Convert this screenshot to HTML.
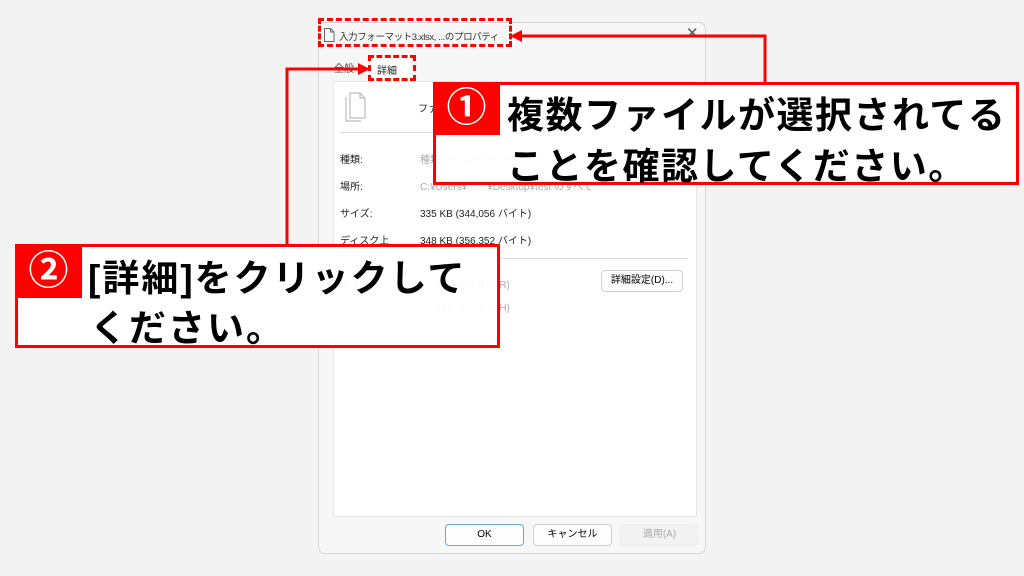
<!DOCTYPE html>
<html><head><meta charset="utf-8"><style>
*{margin:0;padding:0;box-sizing:border-box}
body{width:1024px;height:576px;background:#f3f3f3;position:relative;overflow:hidden;font-family:"Liberation Sans","Noto Sans CJK JP",sans-serif;}
.a{position:absolute}
.dlg{left:318px;top:22px;width:388px;height:532px;background:#f7f7f7;border:1px solid #d6d6d6;border-radius:7px}
.panel{left:333px;top:81px;width:364px;height:436px;background:#fff;border:1px solid #e6e6e6}
.s{font-size:10px;color:#222}
.g{font-size:10px;color:#aaa}
.btn{background:#fdfdfd;border:1px solid #d0d0d0;border-radius:4px;font-size:10px;text-align:center;line-height:20px;height:22px}
.call{background:rgba(255,255,255,0.95);border:3px solid #f00}
.num{background:#f00;color:#fff;font-size:40px;font-weight:bold;text-align:center}
.t{font-size:37px;font-weight:bold;color:#000;white-space:nowrap;letter-spacing:1.5px}
.cb{width:11px;height:11px;border:1px solid #ccc;border-radius:2px}
</style></head><body>
<div class="a dlg"></div>
<svg class="a" style="left:323px;top:28px" width="12" height="14"><path d="M1.5 0.5h6l3.5 3.5v9.5h-9.5z M7.5 0.5v3.5h3.5" fill="none" stroke="#666"/></svg>
<div class="a s" style="left:339px;top:29px;font-size:9.5px;color:#333;letter-spacing:-0.4px">入力フォーマット3.xlsx, ...のプロパティ</div>
<div class="a" style="left:686px;top:24px;font-size:15px;color:#555">✕</div>
<div class="a s" style="left:334px;top:60px;color:#444">全般</div>
<div class="a" style="left:371px;top:56px;width:40px;height:26px;background:#fff"></div>
<div class="a s" style="left:377px;top:62px">詳細</div>
<div class="a panel"></div>
<svg class="a" style="left:343px;top:91px" width="28" height="32"><path d="M7 2h10l5 5v20H7z M17 2v5h5 M3 6v24h15" fill="none" stroke="#bbb" stroke-width="1.2"/></svg>
<div class="a s" style="left:418px;top:100px">ファ</div>
<div class="a" style="left:340px;top:132px;width:348px;height:1px;background:#ddd"></div>
<div class="a s" style="left:340px;top:151px">種類:</div><div class="a g" style="left:420px;top:151px">種類 Microsoft Excel ワークシートのすべて</div>
<div class="a s" style="left:340px;top:178px">場所:</div><div class="a g" style="left:420px;top:178px">C:¥Users¥　　¥Desktop¥test のすべて</div>
<div class="a s" style="left:340px;top:205px">サイズ:</div><div class="a s" style="left:420px;top:205px">335 KB (344,056 バイト)</div>
<div class="a s" style="left:340px;top:232px">ディスク上</div><div class="a s" style="left:420px;top:232px">348 KB (356,352 バイト)</div>
<div class="a g" style="left:340px;top:245px">のサイズ:</div>
<div class="a" style="left:340px;top:258px;width:348px;height:1px;background:#ddd"></div>
<div class="a g" style="left:340px;top:276px">属性:</div>
<div class="a cb" style="left:420px;top:277px"></div><div class="a g" style="left:436px;top:276px">読み取り専用(R)</div>
<div class="a cb" style="left:420px;top:300px"></div><div class="a g" style="left:436px;top:299px">隠しファイル(H)</div>
<div class="a btn" style="left:601px;top:270px;width:82px">詳細設定(D)...</div>
<div class="a btn" style="left:445px;top:524px;width:79px;border:1px solid #6aa6e0">OK</div>
<div class="a btn" style="left:533px;top:524px;width:79px">キャンセル</div>
<div class="a btn" style="left:620px;top:524px;width:79px;color:#aaa;background:#f3f3f3;border-color:#eee">適用(A)</div>

<div class="a" style="left:318px;top:18px;width:194px;height:29px;border:3px dashed #f00"></div>
<div class="a" style="left:368px;top:55px;width:48px;height:26px;border:3px dashed #f00"></div>
<svg class="a" style="left:0;top:0" width="1024" height="576">
<polyline points="765,84 765,36 520,36" fill="none" stroke="#f00" stroke-width="3"/>
<polygon points="510,36 522,30 522,42" fill="#f00"/>
<polyline points="287,246 287,69 360,69" fill="none" stroke="#f00" stroke-width="3"/>
<polygon points="370,69 358,63 358,75" fill="#f00"/>
</svg>

<div class="a call" style="left:433px;top:82px;width:586px;height:103px"></div>
<div class="a num" style="left:433px;top:82px;width:67px;height:53px;line-height:53px">①</div>
<div class="a t" style="left:507px;top:85px">複数ファイルが選択されてる</div>
<div class="a t" style="left:507px;top:136px">ことを確認してください。</div>

<div class="a call" style="left:15px;top:244px;width:485px;height:104px"></div>
<div class="a num" style="left:15px;top:244px;width:67px;height:54px;line-height:54px">②</div>
<div class="a t" style="left:88px;top:248px;letter-spacing:2px">[詳細]をクリックして</div>
<div class="a t" style="left:90px;top:298px;letter-spacing:2px">ください。</div>
</body></html>
